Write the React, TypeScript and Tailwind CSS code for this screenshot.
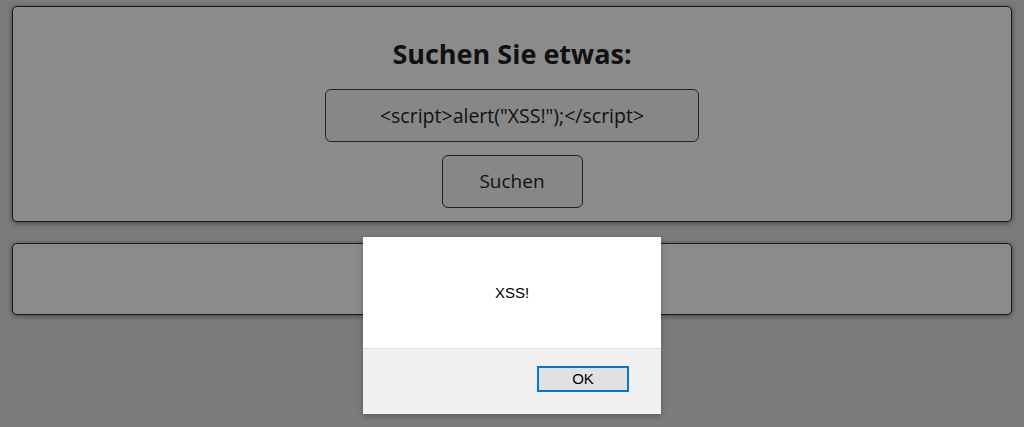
import React from "react";

export default function App() {
  return (
    <div className="relative min-h-[427px] bg-[#7b7b7b] px-3 pt-[6px] font-['Open_Sans','Noto_Sans',sans-serif] text-[#111]">
      <div className="flex flex-col items-center rounded-[5px] border border-[#1a1a1a] bg-[#8b8b8b] pt-[30px] pb-[13px] shadow-[0_1px_5px_rgba(0,0,0,0.5)]">
        <h1 className="text-[27px] font-bold leading-[34px]">Suchen Sie etwas:</h1>
        <div className="mt-[18px] flex h-[53px] w-[374px] items-center justify-center rounded-[6px] border border-[#222] bg-[#878787] text-[19.5px]">
          &lt;script&gt;alert("XSS!");&lt;/script&gt;
        </div>
        <button className="mt-[13px] h-[53px] w-[141px] rounded-[6px] border border-[#222] bg-[#878787] text-[19px]">
          Suchen
        </button>
      </div>
      <div className="mt-[21px] h-[72px] rounded-[5px] border border-[#1a1a1a] bg-[#8b8b8b] shadow-[0_1px_5px_rgba(0,0,0,0.5)]" />

      {/* alert dialog */}
      <div className="absolute left-[363px] top-[237px] flex h-[177px] w-[298px] flex-col font-['Liberation_Sans',Arial,sans-serif] text-[15px] text-black shadow-[0_2px_6px_rgba(0,0,0,0.25)]">
        <div className="flex h-[111px] items-center justify-center bg-white pt-[1px]">XSS!</div>
        <div className="flex flex-1 items-start justify-end border-t border-[#dfdfdf] bg-[#f0f0f0] pt-[17px] pr-[32px]">
          <button className="h-[26px] w-[92px] border-2 border-[#0078d7] bg-[#e1e1e1] text-[15px]">OK</button>
        </div>
      </div>
    </div>
  );
}
